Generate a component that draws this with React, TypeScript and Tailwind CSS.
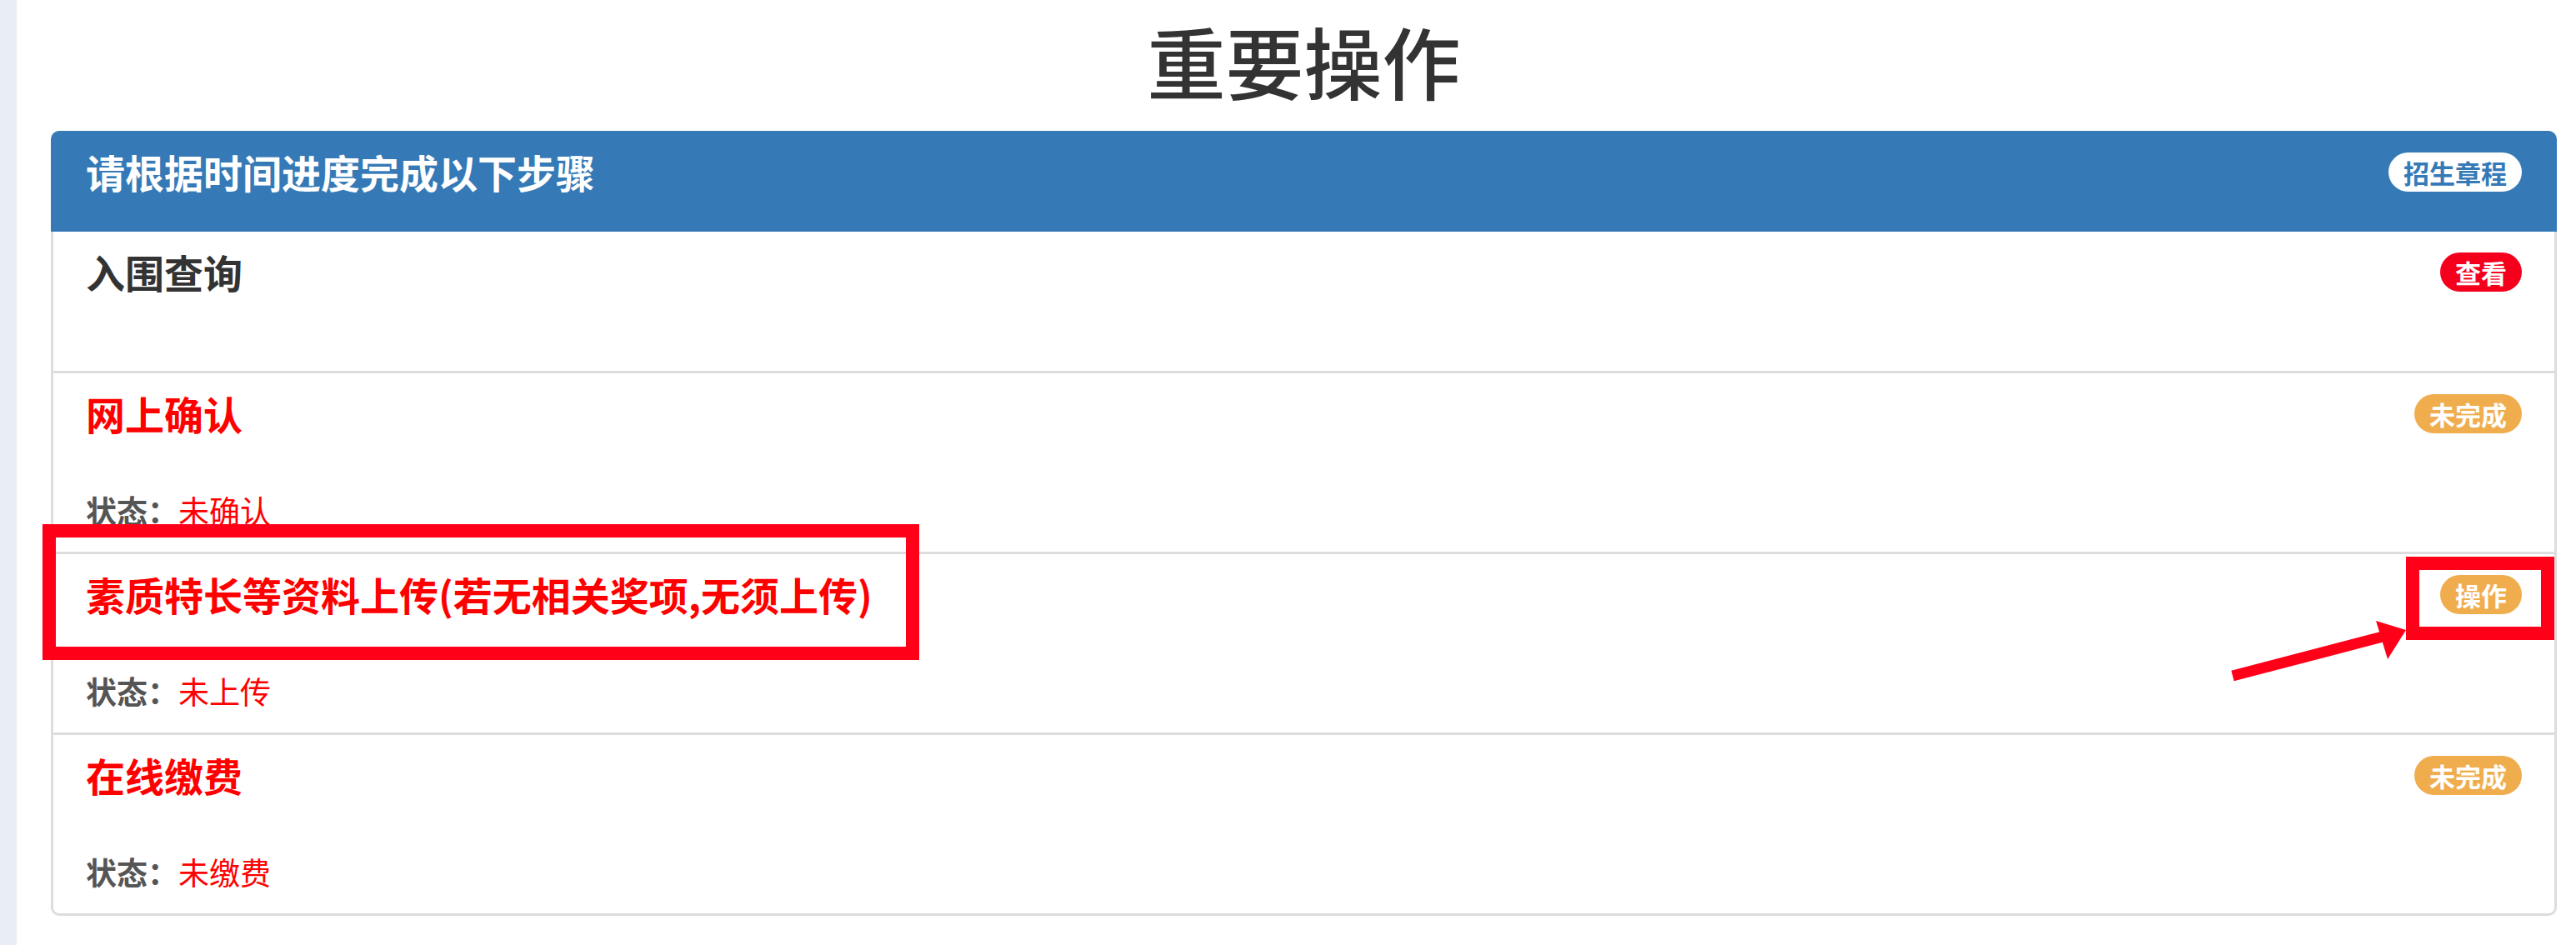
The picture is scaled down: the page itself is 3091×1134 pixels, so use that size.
import React from 'react';

const steps = [
  { title: '入围查询', titleColor: 'text-[#333333]', badge: '查看', badgeBg: 'bg-[#f5001c]', status: null },
  { title: '网上确认', titleColor: 'text-[#ff0000]', badge: '未完成', badgeBg: 'bg-[#f0ad4e]', status: '未确认' },
  {
    title: '素质特长等资料上传(若无相关奖项,无须上传)',
    titleColor: 'text-[#ff0000]',
    badge: '操作',
    badgeBg: 'bg-[#f0ad4e]',
    status: '未上传',
    marked: true,
  },
  { title: '在线缴费', titleColor: 'text-[#ff0000]', badge: '未完成', badgeBg: 'bg-[#f0ad4e]', status: '未缴费' },
];

const font = { fontFamily: '"Noto Sans CJK SC", "Liberation Sans", sans-serif' };

const App = () => {
  return (
    <div className="flex min-h-[1134px] w-[3091px] bg-white" style={font}>
      <div className="w-[20px] shrink-0 bg-[#e8eef4]" />

      <div className="flex-1 pl-[41px] pr-[23px]">
        <h1 className="h-[157px] pt-[21px] text-center text-[94px] leading-[103px] font-medium text-[#333333]">
          重要操作
        </h1>

        <div className="flex flex-col">
          {/* heading */}
          <div className="flex h-[121px] items-start justify-between rounded-t-[10px] bg-[#357ab7] px-[42px] pt-[23px]">
            <h3 className="text-[47px] leading-[52px] font-bold text-white">请根据时间进度完成以下步骤</h3>
            <div className="flex h-[52px] items-center">
              <span className="rounded-full bg-white px-[18px] py-[8px] text-[31px] leading-[31px] font-bold text-[#357ab7]">
                招生章程
              </span>
            </div>
          </div>

          {/* list */}
          <div className="rounded-b-[10px] border-x-[3px] border-b-[3px] border-[#dddddd]">
            {steps.map((step, i) => (
              <div
                key={step.title}
                className={`flex items-start justify-between px-[39px] pt-[22px] ${
                  i === 0 ? 'pb-[93px]' : 'border-t-[3px] border-[#dddddd] pb-[23px]'
                }`}
              >
                <div className="flex flex-col">
                  <h4 className={`relative text-[47px] leading-[52px] font-bold ${step.titleColor}`}>
                    {step.title}
                    {step.marked && (
                      <span className="pointer-events-none absolute -left-[52px] -top-[58px] h-[163px] w-[1052px] border-[16px] border-[#ff0019]" />
                    )}
                  </h4>
                  {step.status && (
                    <p className="mt-[64px] text-[37px] leading-[53px] text-[#555555]">
                      <span className="font-bold">状态：</span>
                      <span className="text-[#ff0000]">{step.status}</span>
                    </p>
                  )}
                </div>

                <div className="relative flex h-[52px] items-center">
                  <span
                    className={`rounded-full px-[18px] py-[8px] text-[31px] leading-[31px] font-bold text-white ${step.badgeBg}`}
                  >
                    {step.badge}
                  </span>
                  {step.marked && (
                    <>
                      <span className="pointer-events-none absolute -left-[41px] -top-[19px] h-[100px] w-[178px] border-[16px] border-[#ff0019]" />
                      <svg
                        className="pointer-events-none absolute -left-[257px] top-[52px]"
                        width="225"
                        height="80"
                        viewBox="0 0 225 80"
                      >
                        <line x1="8" y1="72" x2="188" y2="25" stroke="#ff0019" strokeWidth="13" />
                        <polygon points="216,17 180,6 194,52" fill="#ff0019" />
                      </svg>
                    </>
                  )}
                </div>
              </div>
            ))}
          </div>
        </div>
      </div>
    </div>
  );
};

export default App;
